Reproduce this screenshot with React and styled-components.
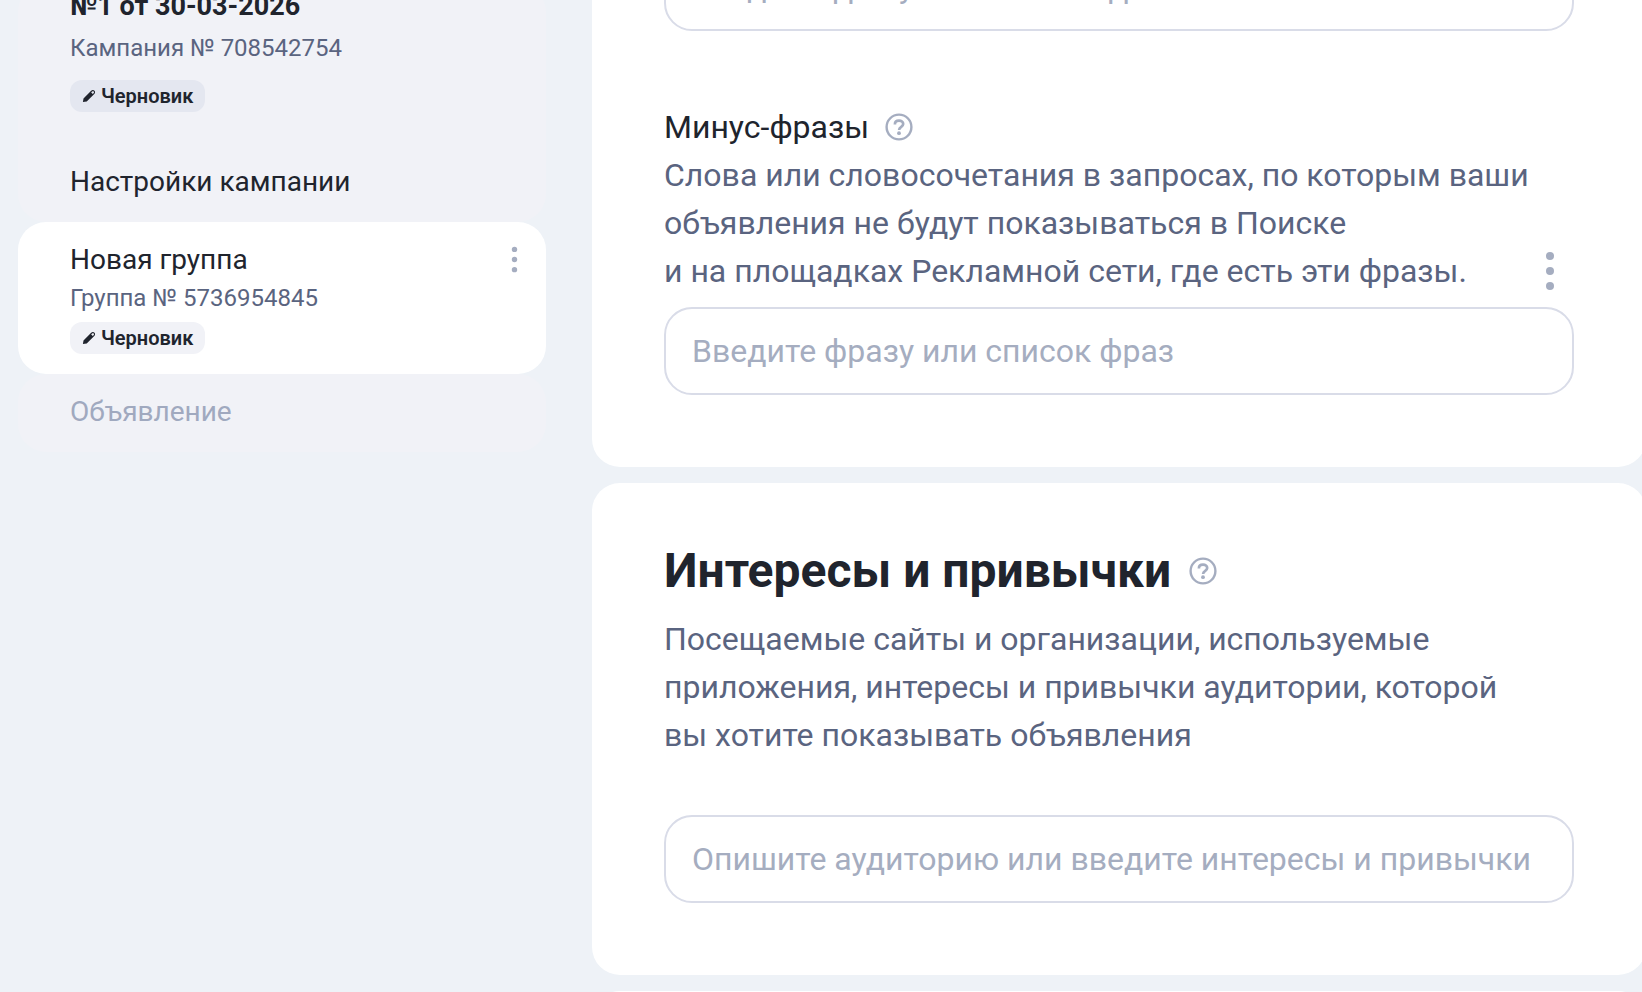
import React, { useState } from 'react';
import styled, { createGlobalStyle } from 'styled-components';


const PencilIcon = () => (
    <svg width="14" height="14" viewBox="0 0 14 14" fill="currentColor" aria-hidden="true">
        <path
            fillRule="evenodd"
            d="M.9 13.1 1.5 9.4 8.9 2C10.1.8 11.6.8 12.5 1.7S13.2 4.1 12 5.3L4.7 12.5ZM9.2 3.4 10.8 5 11.7 4.1C12.2 3.6 12.2 3 11.7 2.5S10.6 2 10.1 2.5Z"
        />
    </svg>
)

const HelpIcon = () => (
    <svg width="28" height="28" viewBox="0 0 28 28" fill="none" aria-hidden="true">
        <circle cx="14" cy="14" r="12.4" stroke="currentColor" strokeWidth="2.4" />
        <path d="M9.9 11.4C9.9 9.2 11.6 7.7 14 7.7S18.2 9.1 18.2 11.1C18.2 13.9 14.1 13.7 14.1 16.9" stroke="currentColor" strokeWidth="2.7" />
        <circle cx="14" cy="20.2" r="1.9" fill="currentColor" />
    </svg>
)

const DotsIcon = ({size}) => (
    <svg width={size} height={size} viewBox="0 0 40 40" fill="currentColor" aria-hidden="true">
        <circle cx="20" cy="5" r="4" />
        <circle cx="20" cy="20" r="4" />
        <circle cx="20" cy="35" r="4" />
    </svg>
)

const Draft = ({light}) => (
    <Badge $light={light}>
        <PencilIcon/>
        <span>Черновик</span>
    </Badge>
)


export default function App() {

    const [phrases, setPhrases] = useState("");
    const [minusPhrases, setMinusPhrases] = useState("");
    const [interests, setInterests] = useState("");

  return (
    <>
        <GlobalStyle/>
        <Page>
            <Sidebar>
                <Panel>
                    <Campaign>
                        <h2>№1 от 30-03-2026</h2>
                        <Caption>Кампания № 708542754</Caption>
                        <Draft/>
                    </Campaign>
                    <NavLink href="#campaign">Настройки кампании</NavLink>
                </Panel>
                <Group>
                    <div className="group-info">
                        <a href="#group">Новая группа</a>
                        <Caption>Группа № 5736954845</Caption>
                        <Draft light/>
                    </div>
                    <MenuButton type="button" aria-label="Действия с группой">
                        <DotsIcon size={27}/>
                    </MenuButton>
                </Group>
                <Panel>
                    <NavLink $muted href="#ad">Объявление</NavLink>
                </Panel>
            </Sidebar>
            <Content>
                <Card>
                    <Field
                        aria-label="Ключевые фразы"
                        placeholder="Введите фразу или список фраз"
                        value={phrases}
                        onChange={(e) => setPhrases(e.target.value)}
                    />
                    <Section>
                        <LabelRow>
                            <label htmlFor="minus">Минус-фразы</label>
                            <HelpButton type="button" aria-label="Справка"><HelpIcon/></HelpButton>
                        </LabelRow>
                        <DescriptionRow>
                            <Description>
                                Слова или словосочетания в запросах, по которым ваши
                                объявления не будут показываться в Поиске
                                <br/>
                                и на площадках Рекламной сети, где есть эти фразы.
                            </Description>
                            <MenuButton type="button" aria-label="Действия с фразами">
                                <DotsIcon size={40}/>
                            </MenuButton>
                        </DescriptionRow>
                        <Field
                            id="minus"
                            placeholder="Введите фразу или список фраз"
                            value={minusPhrases}
                            onChange={(e) => setMinusPhrases(e.target.value)}
                        />
                    </Section>
                </Card>
                <Card $titled>
                    <Heading>
                        <h1>Интересы и привычки</h1>
                        <HelpButton type="button" aria-label="Справка"><HelpIcon/></HelpButton>
                    </Heading>
                    <Intro>
                        Посещаемые сайты и организации, используемые
                        приложения, интересы и привычки аудитории, которой
                        вы хотите показывать объявления
                    </Intro>
                    <Field
                        aria-label="Интересы и привычки"
                        placeholder="Опишите аудиторию или введите интересы и привычки"
                        value={interests}
                        onChange={(e) => setInterests(e.target.value)}
                    />
                </Card>
                <Card/>
            </Content>
        </Page>
    </>
  )
}

const GlobalStyle = createGlobalStyle`
    * {
        box-sizing: border-box;
    }
    body {
        margin: 0;
        background-color: #eef2f7;
        color: #20242d;
        font-family: Roboto, "Noto Sans", sans-serif;
    }
    h1, h2, p {
        margin: 0;
    }
    a {
        color: inherit;
        text-decoration: none;
    }
    button {
        display: flex;
        padding: 0;
        border: none;
        background: none;
        color: #a5adc0;
        cursor: pointer;
    }
`;

/* the view is scrolled down, so both columns start above the window */
const Page = styled.div`
    display: flex;
    align-items: flex-start;
    gap: 46px;
    height: 100vh;
    padding-left: 18px;
    overflow: hidden;
`;

const Sidebar = styled.aside`
    flex: 0 0 528px;
    margin-top: -16px;
`;

const Panel = styled.div`
    background-color: #f1f2f7;
    border-radius: 28px;
`;

const Campaign = styled.div`
    padding: 0 52px 32px;
    h2 {
        font-size: 27px;
        line-height: 44px;
        font-weight: 700;
    }
    p {
        margin-bottom: 12px;
        line-height: 40px;
    }
`;

const Caption = styled.p`
    color: #5a6480;
    font-size: 24px;
    line-height: 32px;
`;

const NavLink = styled.a`
    display: block;
    padding: 18px 52px 20px;
    color: ${(props) => props.$muted ? "#a0a9bf" : "#20242d"};
    font-size: 28px;
    line-height: 40px;
`;

const Group = styled.div`
    display: flex;
    justify-content: space-between;
    align-items: flex-start;
    padding: 20px 18px 20px 52px;
    background-color: #ffffff;
    border-radius: 28px;
    .group-info {
        a {
            display: block;
            margin-bottom: 4px;
            font-size: 28px;
            line-height: 36px;
        }
        p {
            margin-bottom: 8px;
        }
    }
    button {
        margin-top: 4px;
    }
`;

const Badge = styled.div`
    display: inline-flex;
    align-items: center;
    gap: 5px;
    height: 32px;
    padding: 0 12px;
    border-radius: 12px;
    background-color: ${(props) => props.$light ? "#f1f2f7" : "#e4e7f0"};
    font-size: 20px;
    font-weight: 600;
    vertical-align: top;
`;

const MenuButton = styled.button`
    flex-shrink: 0;
`;

const HelpButton = styled.button`
    flex-shrink: 0;
`;

const Content = styled.main`
    flex: 1;
    min-width: 0;
    display: flex;
    flex-direction: column;
    gap: 16px;
    margin-top: -129px;
    margin-right: -4px;
`;

const Card = styled.section`
    padding: ${(props) => props.$titled ? "60px" : "72px"} 72px 72px;
    border-radius: 28px;
    background-color: #ffffff;
`;

const Section = styled.div`
    margin-top: 72px;
`;

const LabelRow = styled.div`
    display: flex;
    align-items: center;
    gap: 16px;
    font-size: 32px;
    line-height: 48px;
`;

const DescriptionRow = styled.div`
    display: flex;
    justify-content: space-between;
    align-items: flex-end;
    margin-bottom: 12px;
    button {
        margin: 0 4px 4px 0;
    }
`;

const Description = styled.p`
    max-width: 880px;
    color: #5a6480;
    font-size: 32px;
    line-height: 48px;
`;

const Intro = styled(Description)`
    margin: 16px 0 56px;
`;

const Heading = styled.div`
    display: flex;
    align-items: center;
    gap: 18px;
    h1 {
        font-size: 48px;
        line-height: 56px;
        font-weight: 700;
    }
`;

const Field = styled.input`
    display: block;
    width: 100%;
    height: 88px;
    padding: 0 26px;
    border: 2px solid #d9dce8;
    border-radius: 28px;
    outline: none;
    background-color: #ffffff;
    color: #20242d;
    font-family: inherit;
    font-size: 32px;
    &::placeholder {
        color: #a5adc0;
        opacity: 1;
    }
    &:focus {
        border-color: #a5adc0;
    }
`;
